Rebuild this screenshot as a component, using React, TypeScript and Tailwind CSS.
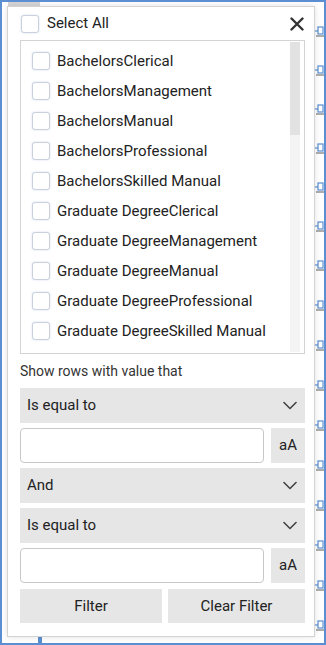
import React from 'react';

const items = [
    'BachelorsClerical',
    'BachelorsManagement',
    'BachelorsManual',
    'BachelorsProfessional',
    'BachelorsSkilled Manual',
    'Graduate DegreeClerical',
    'Graduate DegreeManagement',
    'Graduate DegreeManual',
    'Graduate DegreeProfessional',
    'Graduate DegreeSkilled Manual',
];

const Checkbox = () => (
    <span className="inline-block w-[18px] h-[18px] flex-shrink-0 rounded-[3px] border border-[#c9d1dc] bg-white shadow-[0_0_2px_rgba(120,150,200,0.35)]" />
);

const Chevron = () => (
    <svg width="14" height="9" viewBox="0 0 14 9" fill="none" className="mr-[8px]">
        <path d="M1 1.5L7 7.5L13 1.5" stroke="#444" strokeWidth="1.6" strokeLinecap="round" strokeLinejoin="round" />
    </svg>
);

const Dropdown = ({ label }: { label: string }) => (
    <div className="h-[35px] bg-[#e6e6e6] flex items-center justify-between pl-[7px] text-[15px] text-[#222]">
        <span>{label}</span>
        <Chevron />
    </div>
);

const ValueInput = () => (
    <div className="h-[35px] flex gap-[7px]">
        <div className="flex-1 rounded-[4px] border border-[#c8c8c8] bg-white" />
        <div className="w-[34px] bg-[#e6e6e6] flex items-center justify-center text-[15px] text-[#222]">aA</div>
    </div>
);

export default function App() {
    const marks = [29, 68, 107, 146, 185, 224, 263, 303, 343, 383, 423, 463, 503, 543, 583, 623];

    return (
        <div
            className="relative w-[326px] h-[645px] overflow-hidden bg-white border-2 border-[#5b8fd1]"
            style={{ fontFamily: 'Roboto, "Noto Sans", sans-serif' }}
        >
            {/* grid behind the popup */}
            <div className="absolute left-[6px] top-0 w-[32px] h-[6px] bg-[#d6d6d6]" />
            <div className="absolute left-[36px] top-[634px] w-[4px] h-[10px] bg-[#5b8fd1]" />
            {marks.map((y) => (
                <svg key={y} className="absolute right-0" style={{ top: y - 6 }} width="10" height="12" viewBox="0 0 10 12">
                    <path d="M0 6H4" stroke="#5b8fd1" strokeWidth="1.2" />
                    <rect x="4" y="2" width="5" height="7" fill="none" stroke="#5b8fd1" strokeWidth="1.2" />
                    <path d="M2 11H10" stroke="#777" strokeWidth="1.2" />
                </svg>
            ))}

            {/* filter popup */}
            <div className="absolute left-[5px] top-[4px] w-[308px] h-[631px] bg-white border border-[#d3d3d3] shadow-[0_0_6px_rgba(0,0,0,0.12)] pl-[12px] pr-[9px] flex flex-col">
                <div className="h-[33px] flex items-center justify-between">
                    <div className="flex items-center gap-[8px] pl-[1px]">
                        <Checkbox />
                        <span className="text-[15px] text-[#222]">Select All</span>
                    </div>
                    <svg width="14" height="14" viewBox="0 0 14 14" className="mr-[1px]">
                        <path d="M1.5 1.5L12.5 12.5M12.5 1.5L1.5 12.5" stroke="#333" strokeWidth="2.4" strokeLinecap="round" />
                    </svg>
                </div>

                <div className="relative h-[314px] border border-[#d4d4d4] pt-[5px]">
                    {items.map((item) => (
                        <div key={item} className="h-[30px] flex items-center gap-[7px] pl-[11px]">
                            <Checkbox />
                            <span className="text-[15px] text-[#222] whitespace-nowrap">{item}</span>
                        </div>
                    ))}
                    <div className="absolute right-[4px] top-[1px] bottom-[1px] w-[10px] bg-[#f4f4f4]">
                        <div className="h-[93px] bg-[#e2e2e2]" />
                    </div>
                </div>

                <div className="h-[34px] flex items-center text-[14px] text-[#333]">Show rows with value that</div>

                <div className="flex flex-col gap-[5px]">
                    <Dropdown label="Is equal to" />
                    <ValueInput />
                    <Dropdown label="And" />
                    <Dropdown label="Is equal to" />
                    <ValueInput />
                </div>

                <div className="mt-[6px] h-[34px] flex gap-[6px] text-[15px] text-[#222]">
                    <div className="w-[142px] bg-[#e6e6e6] flex items-center justify-center">Filter</div>
                    <div className="flex-1 bg-[#e6e6e6] flex items-center justify-center">Clear Filter</div>
                </div>
            </div>
        </div>
    );
}
